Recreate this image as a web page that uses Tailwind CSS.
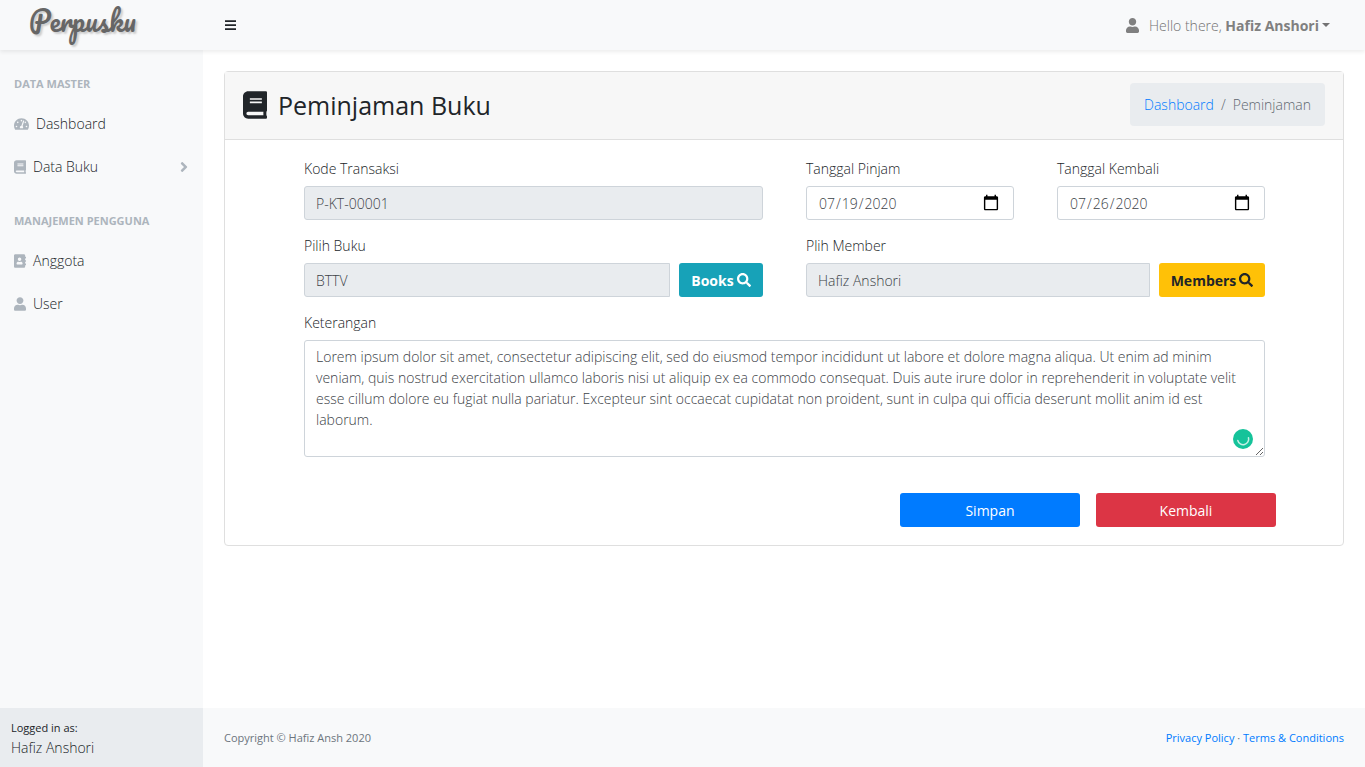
<!DOCTYPE html>
<html lang="id">
<head>
<meta charset="utf-8">
<meta name="viewport" content="width=device-width, initial-scale=1">
<title>Perpusku - Peminjaman Buku</title>
<script src="https://cdn.jsdelivr.net/npm/@tailwindcss/browser@4"></script>
</head>
<body class="min-h-screen flex flex-col bg-white font-['Segoe_UI','Open_Sans',sans-serif] text-sm font-light leading-[21px] text-[#212529]">
<svg class="hidden" aria-hidden="true">
  <symbol id="book" viewBox="0 0 448 512"><path d="M448 360V24c0-13.3-10.7-24-24-24H96C43 0 0 43 0 96v320c0 53 43 96 96 96h328c13.3 0 24-10.7 24-24v-16c0-7.5-3.5-14.3-8.9-18.7-4.2-15.4-4.2-59.3 0-74.7 5.4-4.3 8.9-11.1 8.9-18.6zM128 134c0-3.3 2.7-6 6-6h212c3.3 0 6 2.7 6 6v20c0 3.3-2.7 6-6 6H134c-3.3 0-6-2.7-6-6v-20zm0 64c0-3.3 2.7-6 6-6h212c3.3 0 6 2.7 6 6v20c0 3.3-2.7 6-6 6H134c-3.3 0-6-2.7-6-6v-20zm253.400 250H96c-17.700 0-32-14.300-32-32 0-17.600 14.400-32 32-32h285.400c-1.900 17.100-1.900 46.900 0 64z"/></symbol>
  <symbol id="user" viewBox="0 0 448 512"><path d="M224 256c70.700 0 128-57.300 128-128S294.700 0 224 0 96 57.300 96 128s57.300 128 128 128zm89.600 32h-16.700c-22.200 10.200-46.900 16-72.900 16s-50.600-5.800-72.900-16h-16.700C60.200 288 0 348.200 0 422.400V464c0 26.500 21.500 48 48 48h352c26.500 0 48-21.500 48-48v-41.600c0-74.200-60.200-134.400-134.400-134.400z"/></symbol>
  <symbol id="address" viewBox="0 0 448 512"><path d="M436 160c6.600 0 12-5.400 12-12v-40c0-6.600-5.400-12-12-12h-20V48c0-26.500-21.500-48-48-48H48C21.500 0 0 21.500 0 48v416c0 26.500 21.500 48 48 48h320c26.500 0 48-21.500 48-48v-48h20c6.600 0 12-5.400 12-12v-40c0-6.600-5.400-12-12-12h-20v-64h20c6.600 0 12-5.400 12-12v-40c0-6.600-5.400-12-12-12h-20v-64h20zm-228-32c35.300 0 64 28.700 64 64s-28.700 64-64 64-64-28.700-64-64 28.700-64 64-64zm112 236.800c0 10.600-10 19.200-22.400 19.200H118.400C106 384 96 375.400 96 364.800v-19.200c0-31.800 30.100-57.600 67.200-57.600h5c12.300 5.100 25.700 8 39.800 8s27.600-2.900 39.800-8h5c37.100 0 67.200 25.800 67.200 57.600v19.200z"/></symbol>
  <symbol id="search" viewBox="0 0 512 512"><path d="M505 442.700L405.300 343c-4.500-4.500-10.600-7-17-7H372c27.600-35.300 44-79.700 44-128C416 93.100 322.900 0 208 0S0 93.100 0 208s93.100 208 208 208c48.300 0 92.700-16.400 128-44v16.300c0 6.400 2.500 12.500 7 17l99.700 99.700c9.400 9.400 24.600 9.400 33.900 0l28.300-28.300c9.400-9.400 9.400-24.600.1-34zM208 336c-70.700 0-128-57.200-128-128 0-70.700 57.200-128 128-128 70.700 0 128 57.200 128 128 0 70.700-57.200 128-128 128z"/></symbol>
  <symbol id="tacho" viewBox="0 0 576 512"><path d="M288 32C128.940 32 0 160.940 0 320c0 52.800 14.250 102.260 39.060 144.800 5.610 9.620 16.300 15.200 27.440 15.200h443c11.140 0 21.830-5.580 27.440-15.200C561.750 422.260 576 372.800 576 320c0-159.060-128.940-288-288-288zm0 64c14.710 0 26.580 10.130 30.320 23.650-1.110 2.260-2.640 4.230-3.450 6.670l-9.220 27.670c-5.130 3.490-10.970 6.010-17.640 6.010-17.670 0-32-14.330-32-32S270.330 96 288 96zM96 384c-17.670 0-32-14.330-32-32s14.330-32 32-32 32 14.330 32 32-14.330 32-32 32zm48-160c-17.670 0-32-14.330-32-32s14.330-32 32-32 32 14.330 32 32-14.330 32-32 32zm246.770-72.410l-61.330 184C343.130 347.330 352 364.540 352 384c0 11.720-3.380 22.550-8.880 32H232.880c-5.500-9.450-8.880-20.280-8.880-32 0-33.940 26.500-61.430 59.900-63.590l61.340-184.010c4.170-12.560 17.730-19.450 30.360-15.170 12.570 4.190 19.350 17.790 15.170 30.360zm14.660 57.200l15.520-46.550c3.470-1.290 7.130-2.230 11.050-2.230 17.670 0 32 14.330 32 32s-14.330 32-32 32c-11.380-.01-20.890-6.280-26.570-15.220zM480 384c-17.670 0-32-14.330-32-32s14.330-32 32-32 32 14.330 32 32-14.330 32-32 32z"/></symbol>
  <symbol id="angle" viewBox="0 0 256 512"><path d="M224.300 273l-136 136c-9.400 9.400-24.600 9.400-33.900 0l-22.600-22.600c-9.400-9.400-9.400-24.600 0-33.900l96.400-96.400-96.400-96.400c-9.400-9.400-9.400-24.600 0-33.900L54.300 103c9.400-9.400 24.600-9.400 33.900 0l136 136c9.500 9.400 9.500 24.600.1 34z"/></symbol>
</svg>

<nav class="relative z-10 flex h-[50px] shrink-0 items-center bg-[#f8f9fa] shadow-[0_2px_4px_rgba(0,0,0,0.075)]">
  <a href="#" class="w-[203px] shrink-0 self-start pl-[29px] font-['Pacifico',cursive] text-[27px] font-normal leading-[42px] text-[#666] [text-shadow:2px_2px_2px_#ccc]">Perpusku</a>
  <button type="button" aria-label="Menu" class="ml-[22px] text-[#212529]">
    <svg class="h-3 w-3 fill-current" viewBox="0 0 12 12"><path d="M0 1.300h11v1.800H0zM0 5.300h11v1.800H0zM0 9.300h11v1.800H0z"/></svg>
  </button>
  <button type="button" class="ml-auto mr-[35px] flex items-center text-[#737373]">
    <svg class="mr-[10px] h-[15px] w-[13px] fill-[#808080]"><use href="#user"/></svg>
    <span>Hello there, <b class="font-bold text-[#808080]">Hafiz Anshori</b></span>
    <svg class="ml-[3px] h-1 w-2 fill-current" viewBox="0 0 8 4"><path d="M0 0h8L4 4z"/></svg>
  </button>
</nav>

<div class="flex grow">
  <aside class="flex w-[203px] shrink-0 flex-col bg-[#f8f9fa]">
    <div class="grow text-[#212529]">
      <h2 class="px-[14px] pt-[24px] pb-[9px] text-[11px] font-bold leading-[19px] text-[#adb5bd]">DATA MASTER</h2>
      <a href="#" class="flex h-[43px] items-center gap-[7px] px-[14px]"><svg class="h-[14px] w-[15px] fill-[#adb5bd]"><use href="#tacho"/></svg>Dashboard</a>
      <a href="#" class="flex h-[43px] items-center gap-[7px] px-[14px]"><svg class="h-[14px] w-3 fill-[#adb5bd]"><use href="#book"/></svg>Data Buku<svg class="ml-auto h-4 w-[10px] fill-[#adb5bd]"><use href="#angle"/></svg></a>
      <h2 class="px-[14px] pt-[23px] pb-[9px] text-[11px] font-bold leading-[19px] text-[#adb5bd]">MANAJEMEN PENGGUNA</h2>
      <a href="#" class="flex h-[43px] items-center gap-[7px] px-[14px]"><svg class="h-[14px] w-3 fill-[#adb5bd]"><use href="#address"/></svg>Anggota</a>
      <a href="#" class="flex h-[43px] items-center gap-[7px] px-[14px]"><svg class="h-[14px] w-3 fill-[#adb5bd]"><use href="#user"/></svg>User</a>
    </div>
    <div class="h-[59px] bg-[#e9ecef] px-[11px] pt-[11px]">
      <div class="text-[11px] font-normal leading-[18px]">Logged in as:</div>
      <div class="leading-[21px]">Hafiz Anshori</div>
    </div>
  </aside>

  <div class="flex min-w-0 grow flex-col">
    <main class="grow px-[21px] pt-[21px]">
      <section class="rounded border border-[#dfdfdf]">
        <header class="flex h-[68px] items-center justify-between border-b border-[#dfdfdf] bg-[#f7f7f7] px-[18px] pb-[2px]">
          <h1 class="flex items-center gap-[11px] text-[25px] font-normal leading-[34px]"><svg class="h-7 w-6 fill-current"><use href="#book"/></svg>Peminjaman Buku</h1>
          <nav aria-label="Breadcrumb" class="flex h-[43px] items-center gap-[7px] rounded bg-[#e9ecef] px-[14px] text-[#5f686f]"><a href="#" class="text-[#007bff]">Dashboard</a><span>/</span><span>Peminjaman</span></nav>
        </header>
        <form class="pt-[18px] pr-[78px] pb-[18px] pl-[79px]">
          <div class="grid grid-cols-4 gap-x-[43px] gap-y-[15px]">
            <div class="col-span-2 flex flex-col gap-[7px]">
              <label for="kode">Kode Transaksi</label>
              <input id="kode" readonly value="P-KT-00001" class="h-[34px] w-full rounded-[3px] border border-[#ced4da] bg-[#e9ecef] px-[11px] text-[#3c4247]">
            </div>
            <div class="flex flex-col gap-[7px]">
              <label for="pinjam">Tanggal Pinjam</label>
              <input id="pinjam" type="date" value="2020-07-19" class="h-[34px] w-full rounded-[3px] border border-[#ced4da] bg-white px-[11px] text-[#3c4247] [&::-webkit-calendar-picker-indicator]:h-[18px] [&::-webkit-calendar-picker-indicator]:w-[18px]">
            </div>
            <div class="flex flex-col gap-[7px]">
              <label for="kembali">Tanggal Kembali</label>
              <input id="kembali" type="date" value="2020-07-26" class="h-[34px] w-full rounded-[3px] border border-[#ced4da] bg-white px-[11px] text-[#3c4247] [&::-webkit-calendar-picker-indicator]:h-[18px] [&::-webkit-calendar-picker-indicator]:w-[18px]">
            </div>
            <div class="col-span-2 flex flex-col gap-[7px]">
              <label for="buku">Pilih Buku</label>
              <div class="flex gap-[9px]">
                <input id="buku" readonly value="BTTV" class="h-[34px] min-w-0 grow rounded-l-[3px] border border-[#ced4da] bg-[#e9ecef] px-[11px] text-[#3c4247]">
                <button type="button" class="flex h-[34px] w-[84px] items-center justify-center gap-[3px] rounded-[3px] bg-[#17a2b8] font-bold text-white">Books<svg class="h-[14px] w-[14px] fill-current"><use href="#search"/></svg></button>
              </div>
            </div>
            <div class="col-span-2 flex flex-col gap-[7px]">
              <label for="member">Plih Member</label>
              <div class="flex gap-[9px]">
                <input id="member" readonly value="Hafiz Anshori" class="h-[34px] min-w-0 grow rounded-l-[3px] border border-[#ced4da] bg-[#e9ecef] px-[11px] text-[#3c4247]">
                <button type="button" class="flex h-[34px] w-[106px] items-center justify-center gap-[3px] rounded-[3px] bg-[#ffc107] font-bold text-[#212529]">Members<svg class="h-[14px] w-[14px] fill-current"><use href="#search"/></svg></button>
              </div>
            </div>
            <div class="relative col-span-4 flex flex-col gap-[7px]">
              <label for="ket">Keterangan</label>
              <textarea id="ket" spellcheck="false" class="h-[117px] w-full resize rounded-[3px] border border-[#ced4da] bg-white px-[11px] py-[5px] text-[#3c4247]">Lorem ipsum dolor sit amet, consectetur adipiscing elit, sed do eiusmod tempor incididunt ut labore et dolore magna aliqua. Ut enim ad minim veniam, quis nostrud exercitation ullamco laboris nisi ut aliquip ex ea commodo consequat. Duis aute irure dolor in reprehenderit in voluptate velit esse cillum dolore eu fugiat nulla pariatur. Excepteur sint occaecat cupidatat non proident, sunt in culpa qui officia deserunt mollit anim id est laborum.</textarea>
              <svg class="absolute right-[12px] bottom-[8px] h-5 w-5" viewBox="0 0 20 20" aria-hidden="true"><circle cx="10" cy="10" r="10" fill="#15c39a"/><path d="M4.800 11.500a5.500 5.500 0 0 0 10.700-2.700" fill="none" stroke="#c5f0e6" stroke-width="1.500" stroke-linecap="round"/></svg>
            </div>
          </div>
          <div class="-mr-[11px] mt-[36px] flex justify-end gap-4">
            <button type="submit" class="h-[34px] w-[180px] rounded-[3px] bg-[#007bff] font-normal text-white">Simpan</button>
            <button type="button" class="h-[34px] w-[180px] rounded-[3px] bg-[#dc3545] font-normal text-white">Kembali</button>
          </div>
        </form>
      </section>
    </main>
    <footer class="flex h-[59px] items-center justify-between bg-[#f8f9fa] px-[21px] text-[11px] font-normal leading-[17px] text-[#6c757d]">
      <div>Copyright © Hafiz Ansh 2020</div>
      <div><a href="#" class="text-[#007bff]">Privacy Policy</a> · <a href="#" class="text-[#007bff]">Terms &amp; Conditions</a></div>
    </footer>
  </div>
</div>
</body>
</html>
